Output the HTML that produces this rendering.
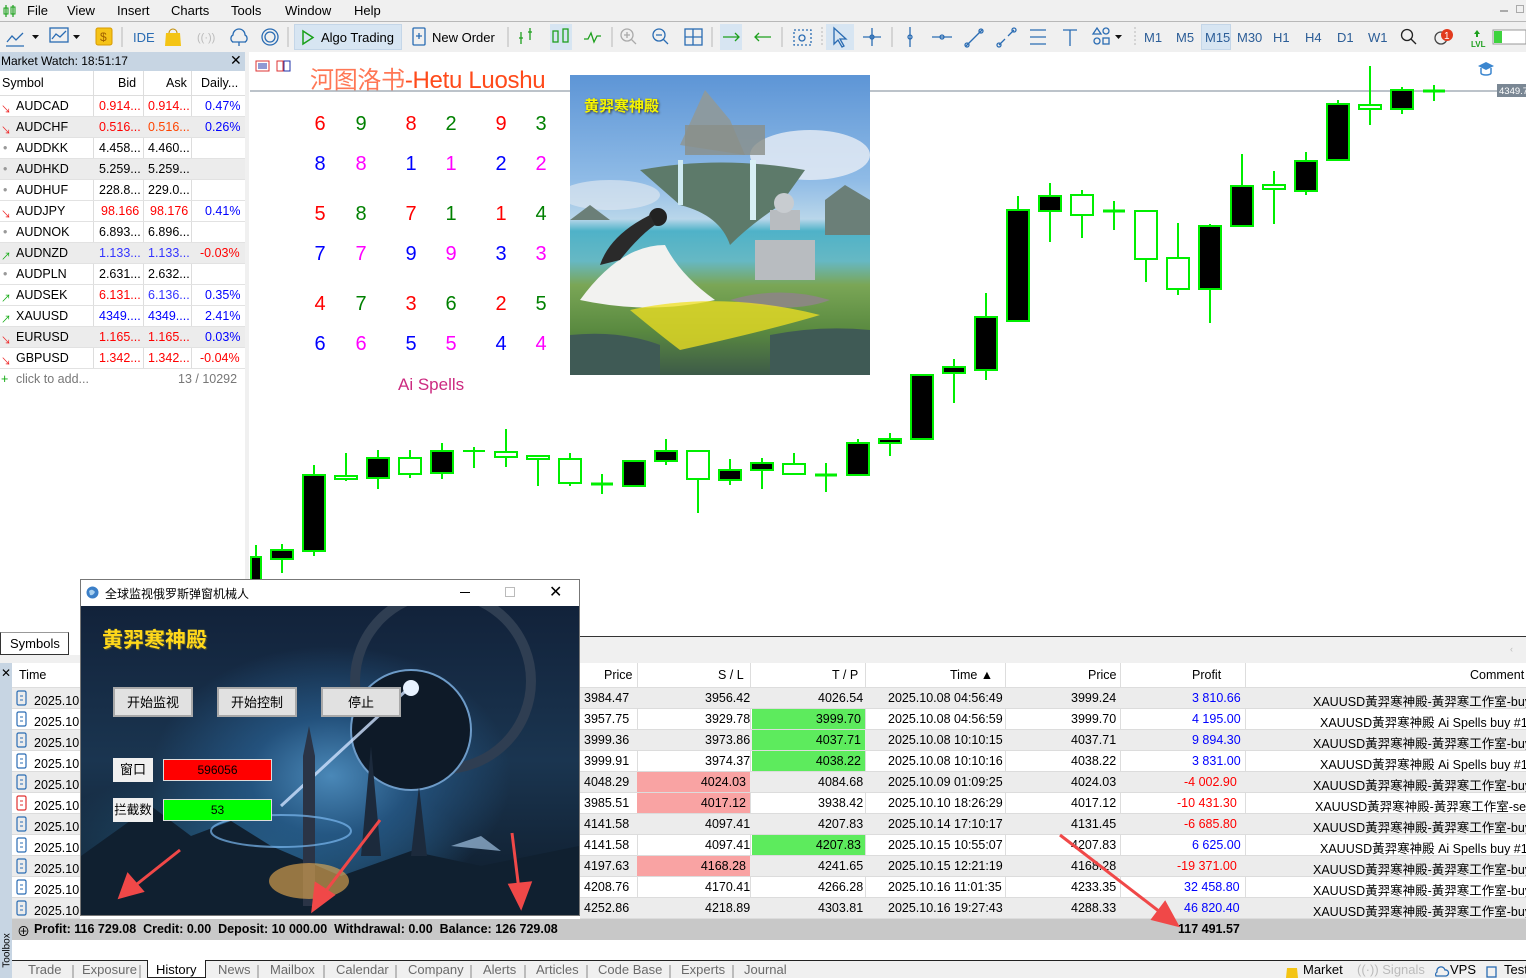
<!DOCTYPE html>
<html><head><meta charset="utf-8">
<style>
*{margin:0;padding:0;box-sizing:border-box}
body{width:1526px;height:978px;overflow:hidden;background:#fff;font-family:"Liberation Sans","Noto Sans CJK SC",sans-serif;font-size:13px;color:#000;position:relative}
.a{position:absolute;white-space:nowrap}
.menu span{position:absolute;top:3px;font-size:13px}
.tf{position:absolute;top:30px;font-size:13px;color:#2b5d97}
.mw{position:absolute;left:0;width:245px;height:21px;font-size:12.5px;border-bottom:1px solid #e2e2e2}
.mw span{position:absolute;top:3px;white-space:nowrap}
.mw .ar{font-size:10px;top:5px}
.tr{position:absolute;left:580px;width:946px;height:21px;font-size:12.5px;border-bottom:1px solid #dcdcdc;overflow:hidden}
.tr span{position:absolute;top:3px;text-align:right;white-space:nowrap}
.lt{position:absolute;left:12px;width:68px;height:21px;font-size:12.5px;border-bottom:1px solid #dcdcdc}
.num{position:absolute;font-size:20px;font-family:"Liberation Sans",sans-serif;width:20px;text-align:center}
.tab{position:absolute;top:962px;font-size:13px;color:#6a6a6a;white-space:nowrap}
.btn{position:absolute;background:#e1e1e1;border:2px solid #a9a9a9;font-size:13px;text-align:center;line-height:27px}
</style></head><body>

<div class="a" style="left:0;top:0;width:1526px;height:22px;background:#f0f0f0"></div>
<svg class="a" style="left:3px;top:4px" width="14" height="14"><path d="M3 1v12M10 1v12" stroke="#1aa01a" stroke-width="1.2"/><rect x="1" y="4" width="4" height="6" fill="none" stroke="#1aa01a"/><rect x="8" y="3" width="4" height="7" fill="none" stroke="#1aa01a"/></svg>
<div class="menu"><span style="left:27px">File</span><span style="left:67px">View</span><span style="left:117px">Insert</span><span style="left:171px">Charts</span><span style="left:231px">Tools</span><span style="left:285px">Window</span><span style="left:354px">Help</span></div>
<div class="a" style="left:1500px;top:10px;width:8px;height:2px;background:#aaa"></div>
<div class="a" style="left:1516px;top:5px;width:8px;height:8px;border:1px solid #aaa"></div>

<div class="a" style="left:0;top:21px;width:1526px;height:31px;background:#f0f0f0;border-top:1px solid #b8b8b8"></div>
<div class="a" style="left:294px;top:24px;width:108px;height:26px;background:#d7e5f2;border:1px solid #c4d6e8"></div>
<div class="a" style="left:550px;top:24px;width:22px;height:26px;background:#d7e5f2"></div>
<div class="a" style="left:720px;top:24px;width:22px;height:26px;background:#d7e5f2"></div>
<div class="a" style="left:826px;top:24px;width:28px;height:26px;background:#d7e5f2"></div>
<div class="a" style="left:1201px;top:24px;width:30px;height:26px;background:#d7e5f2;border:1px solid #c4d6e8"></div>
<svg class="a" style="left:0;top:22px" width="1526" height="30">
 <g fill="none" stroke="#2a6cb3" stroke-width="1.3">
  <path d="M7 20l5-6 4 4 7-7M6 24h18"/>
  <rect x="50" y="6" width="18" height="14"/><path d="M52 17l4-5 4 3 6-6"/>
  <path d="M232 20h14M239 20v4M233 13a6 6 0 0 1 12 0a4 4 0 0 1 0 7h-12a4 4 0 0 1 0-7z"/>
  <circle cx="270" cy="15" r="8"/><circle cx="270" cy="15" r="5"/>
  <rect x="413" y="6" width="12" height="17" rx="1"/><path d="M416 14h6M419 11v6"/>
  <path d="M521 10v12M519 16h4M530 6v12M528 10h4" stroke="#1ea01e"/>
  <rect x="553" y="9" width="5" height="11" stroke="#1ea01e"/><rect x="563" y="7" width="5" height="13" stroke="#1ea01e"/>
  <path d="M584 17l4 0 3-6 3 9 3-6 4 0" stroke="#1ea01e"/>
  <circle cx="627" cy="13" r="6" stroke="#aaa"/><path d="M631 17l5 5M624 13h6M627 10v6" stroke="#aaa"/>
  <circle cx="659" cy="13" r="6"/><path d="M663 17l5 5M656 13h6"/>
  <rect x="685" y="7" width="17" height="16"/><path d="M693 7v16M685 15h17"/>
  <path d="M723 15h16M735 11l4 4-4 4" stroke="#1ea01e"/>
  <path d="M755 15h16M759 11l-4 4 4 4" stroke="#1ea01e"/>
  <rect x="794" y="8" width="17" height="15" stroke-dasharray="2 2"/><circle cx="802" cy="16" r="3"/>
  <path d="M834 6l0 16 4-4 4 7 2-1-4-7 6 0z"/>
  <path d="M872 6v18M863 15h18"/><circle cx="872" cy="15" r="2"/>
  <path d="M910 5v20"/><circle cx="910" cy="15" r="2"/>
  <path d="M932 15h20"/><circle cx="942" cy="15" r="2"/>
  <path d="M966 24l16-16"/><circle cx="967" cy="23" r="2"/><circle cx="981" cy="9" r="2"/>
  <path d="M999 23l6-6M1008 14l6-6"/><circle cx="999" cy="23" r="2"/><circle cx="1014" cy="8" r="2"/>
  <path d="M1030 8h16M1030 15h16M1030 22h16"/>
  <path d="M1063 8h14M1070 8v16"/>
  <path d="M1093 12l4-6 4 6z"/><circle cx="1106" cy="9" r="3"/><circle cx="1097" cy="19" r="3"/><rect x="1103" y="16" width="6" height="6"/>
  <circle cx="1407" cy="13" r="5.5" stroke="#222"/><path d="M1411 17l5 5" stroke="#222"/>
  <circle cx="1441" cy="16" r="6" stroke="#444"/>
 </g>
 <path d="M32 13h7l-3.5 4z M73 13h7l-3.5 4z M1115 13h7l-3.5 4z" fill="#111"/>
 <rect x="96" y="6" width="16" height="17" rx="2" fill="#f5c318" stroke="#d79a00"/><text x="100" y="19" font-size="12" fill="#a06000">$</text>
 <path d="M166 11h14l1 13h-16z" fill="#f4c414"/><path d="M169 11a4 4 0 0 1 8 0" fill="none" stroke="#c08a00"/>
 <text x="197" y="19" font-size="11" fill="#bbb">((·))</text>
 <path d="M303 9v13l10-6.5z" fill="none" stroke="#19a019" stroke-width="1.5"/>
 <path d="M122 5v20M288 5v20M508 5v20M612 5v20M712 5v20M782 5v20M892 5v20" stroke="#b8b8b8"/>
 <path d="M822 5v20M1135 5v20" stroke="#b8b8b8" stroke-dasharray="2 2"/>
 <circle cx="1447" cy="13" r="6" fill="#e23a1e"/><text x="1444" y="17" font-size="10" fill="#fff">1</text>
 <text x="1471" y="25" font-size="8" fill="#1ea01e" font-weight="bold">LVL</text><path d="M1477 8l-3 4h2v3h2v-3h2z" fill="#1ea01e"/>
 <rect x="1493" y="8" width="33" height="14" fill="#fff" stroke="#999"/><rect x="1494" y="9" width="8" height="12" fill="#3ed33e"/>
</svg>
<div class="a" style="left:133px;top:30px;color:#2a6cb3">IDE</div>
<div class="a" style="left:321px;top:30px">Algo Trading</div>
<div class="a" style="left:432px;top:30px">New Order</div>
<div class="tf" style="left:1144px">M1</div><div class="tf" style="left:1176px">M5</div><div class="tf" style="left:1205px">M15</div><div class="tf" style="left:1237px">M30</div><div class="tf" style="left:1273px">H1</div><div class="tf" style="left:1305px">H4</div><div class="tf" style="left:1337px">D1</div><div class="tf" style="left:1368px">W1</div>

<div class="a" style="left:0;top:52px;width:245px;height:580px;background:#fff"></div>
<div class="a" style="left:245px;top:52px;width:4px;height:585px;background:#f0f0f0"></div>
<div class="a" style="left:0;top:52px;width:245px;height:19px;background:#c7d5e3;font-size:12px;padding:2px 0 0 1px">Market Watch: 18:51:17<span style="position:absolute;left:230px;top:0;font-size:14px">✕</span></div>
<div class="a" style="left:0;top:71px;width:245px;height:25px;border-bottom:1px solid #ddd;font-size:12.5px">
 <span class="a" style="left:2px;top:5px">Symbol</span><span class="a" style="left:118px;top:5px">Bid</span><span class="a" style="left:166px;top:5px">Ask</span><span class="a" style="left:201px;top:5px">Daily...</span></div>
<div class="a" style="left:93px;top:71px;width:1px;height:298px;background:#ddd"></div>
<div class="a" style="left:143px;top:71px;width:1px;height:298px;background:#ddd"></div>
<div class="a" style="left:191px;top:71px;width:1px;height:298px;background:#ddd"></div>

<div class="mw" style="top:96px"><span class="ar" style="left:1px;color:#e22">↘</span><span style="left:16px">AUDCAD</span><span style="left:99px;color:#f00">0.914...</span><span style="left:148px;color:#f00">0.914...</span><span style="left:205px;color:#00f">0.47%</span></div>
<div class="mw" style="top:117px;background:#ececec"><span class="ar" style="left:1px;color:#e22">↘</span><span style="left:16px">AUDCHF</span><span style="left:99px;color:#f00">0.516...</span><span style="left:148px;color:#f40">0.516...</span><span style="left:205px;color:#00f">0.26%</span></div>
<div class="mw" style="top:138px"><span style="left:3px;color:#999">•</span><span style="left:16px">AUDDKK</span><span style="left:99px">4.458...</span><span style="left:148px">4.460...</span></div>
<div class="mw" style="top:159px;background:#ececec"><span style="left:3px;color:#999">•</span><span style="left:16px">AUDHKD</span><span style="left:99px">5.259...</span><span style="left:148px">5.259...</span></div>
<div class="mw" style="top:180px"><span style="left:3px;color:#999">•</span><span style="left:16px">AUDHUF</span><span style="left:99px">228.8...</span><span style="left:148px">229.0...</span></div>
<div class="mw" style="top:201px"><span class="ar" style="left:1px;color:#e22">↘</span><span style="left:16px">AUDJPY</span><span style="left:101px;color:#f00">98.166</span><span style="left:150px;color:#f00">98.176</span><span style="left:205px;color:#00f">0.41%</span></div>
<div class="mw" style="top:222px"><span style="left:3px;color:#999">•</span><span style="left:16px">AUDNOK</span><span style="left:99px">6.893...</span><span style="left:148px">6.896...</span></div>
<div class="mw" style="top:243px;background:#ececec"><span class="ar" style="left:1px;color:#1a1">↗</span><span style="left:16px">AUDNZD</span><span style="left:99px;color:#33f">1.133...</span><span style="left:148px;color:#33f">1.133...</span><span style="left:200px;color:#f00">-0.03%</span></div>
<div class="mw" style="top:264px"><span style="left:3px;color:#999">•</span><span style="left:16px">AUDPLN</span><span style="left:99px">2.631...</span><span style="left:148px">2.632...</span></div>
<div class="mw" style="top:285px"><span class="ar" style="left:1px;color:#1a1">↗</span><span style="left:16px">AUDSEK</span><span style="left:99px;color:#f00">6.131...</span><span style="left:148px;color:#33f">6.136...</span><span style="left:205px;color:#00f">0.35%</span></div>
<div class="mw" style="top:306px"><span class="ar" style="left:1px;color:#1a1">↗</span><span style="left:16px">XAUUSD</span><span style="left:99px;color:#00f">4349....</span><span style="left:148px;color:#00f">4349....</span><span style="left:205px;color:#00f">2.41%</span></div>
<div class="mw" style="top:327px;background:#ececec"><span class="ar" style="left:1px;color:#e22">↘</span><span style="left:16px">EURUSD</span><span style="left:99px;color:#f00">1.165...</span><span style="left:148px;color:#f00">1.165...</span><span style="left:205px;color:#00f">0.03%</span></div>
<div class="mw" style="top:348px"><span class="ar" style="left:1px;color:#e22">↘</span><span style="left:16px">GBPUSD</span><span style="left:99px;color:#f00">1.342...</span><span style="left:148px;color:#f00">1.342...</span><span style="left:200px;color:#f00">-0.04%</span></div>
<div class="mw" style="top:369px;border:none;color:#777"><span style="left:1px;color:#1a1">+</span><span style="left:16px">click to add...</span><span style="left:178px">13 / 10292</span></div>

<svg class="a" style="left:0;top:0" width="1526" height="640">
 <line x1="250" y1="91" x2="1497" y2="91" stroke="#7a8794" stroke-width="1"/>
 <rect x="1497" y="84" width="29" height="13" fill="#7a8794"/>
 <text x="1499" y="94" font-size="9.5" fill="#fff">4349.7</text>
 <g stroke="#00ee00" stroke-width="2">
  <line x1="256" y1="545" x2="256" y2="600"/><rect x="251" y="557" width="10" height="40" fill="#000"/>
  <line x1="282" y1="544" x2="282" y2="573"/><rect x="271" y="550" width="22" height="9" fill="#000"/>
  <line x1="314" y1="465" x2="314" y2="556"/><rect x="303" y="475" width="22" height="76" fill="#000"/>
  <line x1="346" y1="453" x2="346" y2="481"/><rect x="335" y="476" width="22" height="3" fill="#fff"/>
  <line x1="378" y1="450" x2="378" y2="489"/><rect x="367" y="458" width="22" height="20" fill="#000"/>
  <line x1="410" y1="450" x2="410" y2="478"/><rect x="399" y="458" width="22" height="16" fill="#fff"/>
  <line x1="442" y1="443" x2="442" y2="479"/><rect x="431" y="451" width="22" height="22" fill="#000"/>
  <line x1="474" y1="447" x2="474" y2="468"/><line x1="463" y1="451" x2="485" y2="451"/>
  <line x1="506" y1="429" x2="506" y2="467"/><rect x="495" y="452" width="22" height="5" fill="#fff"/>
  <line x1="538" y1="455" x2="538" y2="486"/><rect x="527" y="456" width="22" height="3" fill="#fff"/>
  <line x1="570" y1="453" x2="570" y2="486"/><rect x="559" y="459" width="22" height="24" fill="#fff"/>
  <line x1="602" y1="474" x2="602" y2="494"/><line x1="591" y1="484" x2="613" y2="484" stroke-width="3"/>
  <line x1="634" y1="460" x2="634" y2="486"/><rect x="623" y="461" width="22" height="25" fill="#000"/>
  <line x1="666" y1="439" x2="666" y2="465"/><rect x="655" y="451" width="22" height="10" fill="#000"/>
  <line x1="698" y1="451" x2="698" y2="513"/><rect x="687" y="451" width="22" height="28" fill="#fff"/>
  <line x1="730" y1="459" x2="730" y2="485"/><rect x="719" y="470" width="22" height="10" fill="#000"/>
  <line x1="762" y1="458" x2="762" y2="489"/><rect x="751" y="463" width="22" height="7" fill="#000"/>
  <line x1="794" y1="453" x2="794" y2="475"/><rect x="783" y="464" width="22" height="10" fill="#fff"/>
  <line x1="826" y1="463" x2="826" y2="492"/><line x1="815" y1="475" x2="837" y2="475" stroke-width="3"/>
  <line x1="858" y1="439" x2="858" y2="475"/><rect x="847" y="443" width="22" height="32" fill="#000"/>
  <line x1="890" y1="433" x2="890" y2="456"/><rect x="879" y="439" width="22" height="4" fill="#000"/>
  <line x1="922" y1="374" x2="922" y2="440"/><rect x="911" y="375" width="22" height="64" fill="#000"/>
  <line x1="954" y1="359" x2="954" y2="403"/><rect x="943" y="367" width="22" height="6" fill="#000"/>
  <line x1="986" y1="293" x2="986" y2="380"/><rect x="975" y="317" width="22" height="53" fill="#000"/>
  <line x1="1018" y1="196" x2="1018" y2="322"/><rect x="1007" y="210" width="22" height="111" fill="#000"/>
  <line x1="1050" y1="183" x2="1050" y2="242"/><rect x="1039" y="196" width="22" height="15" fill="#000"/>
  <line x1="1082" y1="190" x2="1082" y2="238"/><rect x="1071" y="195" width="22" height="20" fill="#fff"/>
  <line x1="1114" y1="201" x2="1114" y2="230"/><line x1="1103" y1="211" x2="1125" y2="211" stroke-width="3"/>
  <line x1="1146" y1="211" x2="1146" y2="282"/><rect x="1135" y="211" width="22" height="48" fill="#fff"/>
  <line x1="1178" y1="223" x2="1178" y2="295"/><rect x="1167" y="258" width="22" height="31" fill="#fff"/>
  <line x1="1210" y1="224" x2="1210" y2="323"/><rect x="1199" y="226" width="22" height="63" fill="#000"/>
  <line x1="1242" y1="154" x2="1242" y2="226"/><rect x="1231" y="186" width="22" height="40" fill="#000"/>
  <line x1="1274" y1="171" x2="1274" y2="224"/><rect x="1263" y="185" width="22" height="4" fill="#fff"/>
  <line x1="1306" y1="152" x2="1306" y2="195"/><rect x="1295" y="161" width="22" height="30" fill="#000"/>
  <line x1="1338" y1="100" x2="1338" y2="160"/><rect x="1327" y="104" width="22" height="56" fill="#000"/>
  <line x1="1370" y1="66" x2="1370" y2="125"/><rect x="1359" y="105" width="22" height="4" fill="#fff"/>
  <line x1="1402" y1="87" x2="1402" y2="114"/><rect x="1391" y="90" width="22" height="19" fill="#000"/>
  <line x1="1434" y1="85" x2="1434" y2="101"/><line x1="1423" y1="91" x2="1445" y2="91" stroke-width="3"/>
 </g>
 <path d="M1478 66l8-4 8 4-8 4z" fill="#3b86cf"/><path d="M1481 68v5a5 2 0 0 0 10 0v-5" fill="none" stroke="#3b86cf" stroke-width="1.5"/>
 <rect x="256" y="61" width="13" height="10" fill="none" stroke="#d33" stroke-width="1"/><path d="M258 64h9M258 66h9M258 68h9" stroke="#23a" stroke-width="1"/>
 <rect x="277" y="61" width="6" height="10" fill="none" stroke="#d33"/><rect x="284" y="61" width="6" height="10" fill="none" stroke="#23a"/>
</svg>

<div class="a" style="left:310px;top:60px;font-size:24px;color:#ff4a1a;letter-spacing:-0.3px"><span style="color:#ff7755">河图洛书</span>-Hetu Luoshu</div>
<div class="num" style="left:310px;top:113px;color:#f00">6</div><div class="num" style="left:351px;top:113px;color:#008000">9</div><div class="num" style="left:401px;top:113px;color:#f00">8</div><div class="num" style="left:441px;top:113px;color:#008000">2</div><div class="num" style="left:491px;top:113px;color:#f00">9</div><div class="num" style="left:531px;top:113px;color:#008000">3</div>
<div class="num" style="left:310px;top:153px;color:#00f">8</div><div class="num" style="left:351px;top:153px;color:#f0f">8</div><div class="num" style="left:401px;top:153px;color:#00f">1</div><div class="num" style="left:441px;top:153px;color:#f0f">1</div><div class="num" style="left:491px;top:153px;color:#00f">2</div><div class="num" style="left:531px;top:153px;color:#f0f">2</div>
<div class="num" style="left:310px;top:203px;color:#f00">5</div><div class="num" style="left:351px;top:203px;color:#008000">8</div><div class="num" style="left:401px;top:203px;color:#f00">7</div><div class="num" style="left:441px;top:203px;color:#008000">1</div><div class="num" style="left:491px;top:203px;color:#f00">1</div><div class="num" style="left:531px;top:203px;color:#008000">4</div>
<div class="num" style="left:310px;top:243px;color:#00f">7</div><div class="num" style="left:351px;top:243px;color:#f0f">7</div><div class="num" style="left:401px;top:243px;color:#00f">9</div><div class="num" style="left:441px;top:243px;color:#f0f">9</div><div class="num" style="left:491px;top:243px;color:#00f">3</div><div class="num" style="left:531px;top:243px;color:#f0f">3</div>
<div class="num" style="left:310px;top:293px;color:#f00">4</div><div class="num" style="left:351px;top:293px;color:#008000">7</div><div class="num" style="left:401px;top:293px;color:#f00">3</div><div class="num" style="left:441px;top:293px;color:#008000">6</div><div class="num" style="left:491px;top:293px;color:#f00">2</div><div class="num" style="left:531px;top:293px;color:#008000">5</div>
<div class="num" style="left:310px;top:333px;color:#00f">6</div><div class="num" style="left:351px;top:333px;color:#f0f">6</div><div class="num" style="left:401px;top:333px;color:#00f">5</div><div class="num" style="left:441px;top:333px;color:#f0f">5</div><div class="num" style="left:491px;top:333px;color:#00f">4</div><div class="num" style="left:531px;top:333px;color:#f0f">4</div>
<div class="a" style="left:398px;top:375px;font-size:17px;color:#cc2a80">Ai Spells</div>

<div class="a" style="left:570px;top:75px;width:300px;height:300px;overflow:hidden;background:linear-gradient(#5d95d6 0%,#8fbbe6 35%,#b9d6ea 48%,#4fb2c8 52%,#66b8c4 62%,#7aa656 70%,#5a8a40 85%,#3d5a48 100%)">
 <svg width="300" height="300" style="position:absolute;left:0;top:0">
  <ellipse cx="240" cy="80" rx="60" ry="25" fill="#e8eef5" opacity=".8"/>
  <ellipse cx="40" cy="120" rx="50" ry="15" fill="#dbe6f0" opacity=".7"/>
  <path d="M70 95 Q150 80 235 95 L210 130 Q180 150 160 170 Q150 140 110 130z" fill="#5d7a6a"/>
  <path d="M110 70 L135 15 L160 45 L175 80z" fill="#8c9aa0"/>
  <rect x="115" y="50" width="80" height="30" fill="#8a8f88" opacity=".8"/>
  <rect x="108" y="85" width="5" height="45" fill="#cfeaf2"/><rect x="180" y="85" width="6" height="60" fill="#d8f0f5"/>
  <path d="M0 145 L20 130 L40 145z M255 125 L275 110 L300 125 L300 160 L255 160z" fill="#6b7f78"/>
  <path d="M10 225 Q50 170 95 170 Q110 200 145 225 Q80 240 10 225z" fill="#f2f2f0"/>
  <circle cx="88" cy="142" r="9" fill="#222"/><path d="M80 140 Q40 160 30 190 L50 185 Q70 160 85 150z" fill="#2a2a2a"/>
  <path d="M200 135 h30 v20 h-30z M185 165 h60 v40 h-60z" fill="#b8bcc0"/><circle cx="214" cy="128" r="10" fill="#c8ccd0"/>
  <path d="M160 225 Q210 210 260 225 Q220 240 160 225z" fill="#8a8880"/>
  <path d="M60 235 Q150 215 250 240 Q200 255 110 275 Q90 260 60 235z" fill="#f0e020" opacity=".75"/>
  <path d="M0 260 Q50 255 90 270 L90 300 L0 300z M200 260 Q250 250 300 255 L300 300 L200 300z" fill="#3f5a55"/>
 </svg>
 <div class="a" style="left:14px;top:20px;font-size:15px;font-weight:bold;color:#f5f500;text-shadow:1px 1px 2px #333">黄羿寒神殿</div>
</div>

<div class="a" style="left:80px;top:579px;width:500px;height:337px;border:1px solid #777;background:#fff"></div>
<svg class="a" style="left:86px;top:586px" width="13" height="13"><circle cx="6.5" cy="6.5" r="6" fill="#3b7fc8"/><path d="M3 5q3-3 6 1q-2 4-5 3z" fill="#a8d0f0"/></svg>
<div class="a" style="left:105px;top:585px;font-size:12px">全球监视俄罗斯弹窗机械人</div>
<div class="a" style="left:460px;top:592px;width:10px;height:1px;background:#000"></div>
<div class="a" style="left:505px;top:587px;width:10px;height:10px;border:1px solid #bbb"></div>
<div class="a" style="left:549px;top:582px;font-size:16px">✕</div>
<div class="a" style="left:81px;top:606px;width:498px;height:309px;overflow:hidden;background:radial-gradient(ellipse 180px 130px at 250px 170px,#4a88b8 0%,rgba(40,95,145,.7) 45%,rgba(0,0,0,0) 100%),radial-gradient(ellipse 220px 90px at 170px 250px,#23587a 0%,rgba(0,0,0,0) 100%),linear-gradient(#12223a,#1a3550 50%,#0e1a28)">
 <svg width="498" height="309" style="position:absolute;left:0;top:0">
  <circle cx="362" cy="75" r="88" fill="none" stroke="#2f3e52" stroke-width="10"/>
  <circle cx="330" cy="124" r="60" fill="#0e1a28" stroke="#6d9bc8" stroke-width="2"/>
  <path d="M330 80 L200 200" stroke="#cfe2ff" stroke-width="3" opacity=".8"/>
  <circle cx="330" cy="82" r="8" fill="#e8f2ff"/>
  <path d="M0 250 L70 200 L110 230 L150 215 L190 240 L260 270 L330 245 L400 260 L498 240 L498 309 L0 309z" fill="#102030"/>
  <path d="M222 150 L228 120 L234 150 L234 300 L222 300z" fill="#2a3446"/>
  <path d="M280 250 L290 140 L300 250z M330 250 L338 180 L346 250z" fill="#1c2a3c"/>
  <ellipse cx="228" cy="275" rx="40" ry="18" fill="#f0b050" opacity=".6"/>
  <ellipse cx="200" cy="225" rx="70" ry="16" fill="none" stroke="#7ab8f0" stroke-width="2" opacity=".7"/>
  <path d="M370 240 L400 230 L420 245z" fill="#a0c0e0" opacity=".7"/>
 </svg>
 <div class="a" style="left:21px;top:18px;font-size:21px;font-weight:bold;color:#ffd81a;text-shadow:1px 1px 1px #553">黄羿寒神殿</div>
 <div class="btn" style="left:32px;top:81px;width:80px;height:30px">开始监视</div>
 <div class="btn" style="left:136px;top:81px;width:80px;height:30px">开始控制</div>
 <div class="btn" style="left:240px;top:81px;width:80px;height:30px">停止</div>
 <div class="a" style="left:32px;top:152px;width:40px;height:24px;background:#f0f0f0;text-align:center;line-height:24px">窗口</div>
 <div class="a" style="left:82px;top:153px;width:109px;height:22px;background:#f00;border:1px solid #ddd;text-align:center;line-height:20px;font-size:12px">596056</div>
 <div class="a" style="left:32px;top:192px;width:40px;height:24px;background:#f0f0f0;text-align:center;line-height:24px;font-size:12.5px">拦截数</div>
 <div class="a" style="left:82px;top:193px;width:109px;height:22px;background:#0f0;border:1px solid #ddd;text-align:center;line-height:20px;font-size:12px">53</div>
</div>

<div class="a" style="left:0;top:632px;width:69px;height:23px;border:1px solid #333;border-top-color:#999;background:#fff;font-size:13px;padding:3px 0 0 9px">Symbols</div>
<div class="a" style="left:0;top:655px;width:80px;height:8px;background:#f0f0f0"></div>
<div class="a" style="left:580px;top:636px;width:946px;height:27px;background:#f0f0f0;border-top:1px solid #333"></div>
<div class="a" style="left:1510px;top:644px;font-size:9px;color:#bbb">‹</div>
<div class="a" style="left:0;top:663px;width:12px;height:315px;background:#c7d5e3"></div>
<div class="a" style="left:1px;top:666px;font-size:12px">✕</div>
<div class="a" style="left:-10px;top:945px;font-size:10px;transform:rotate(-90deg)">Toolbox</div>
<div class="a" style="left:12px;top:663px;width:68px;height:25px;border-bottom:1px solid #ddd;font-size:12.5px;padding:5px 0 0 7px">Time</div>
<div class="a" style="left:580px;top:663px;width:946px;height:25px;border-bottom:1px solid #ddd;font-size:12.5px">
 <span class="a" style="left:24px;top:5px">Price</span><span class="a" style="left:138px;top:5px">S / L</span><span class="a" style="left:252px;top:5px">T / P</span><span class="a" style="left:370px;top:5px">Time &#9650;</span><span class="a" style="left:508px;top:5px">Price</span><span class="a" style="left:612px;top:5px">Profit</span><span class="a" style="left:890px;top:5px">Comment</span></div>

<div class="lt" style="top:688px;background:#ececec"></div><div class="lt" style="top:709px"></div><div class="lt" style="top:730px;background:#ececec"></div><div class="lt" style="top:751px"></div><div class="lt" style="top:772px;background:#ececec"></div><div class="lt" style="top:793px"></div><div class="lt" style="top:814px;background:#ececec"></div><div class="lt" style="top:835px"></div><div class="lt" style="top:856px;background:#ececec"></div><div class="lt" style="top:877px"></div><div class="lt" style="top:898px;background:#ececec"></div>
<svg class="a" style="left:16px;top:688px" width="12" height="231"><g fill="none" stroke="#2a6cb3" stroke-width="1.2"><rect x="1" y="3" width="9" height="14" rx="1.5"/><rect x="1" y="24" width="9" height="14" rx="1.5"/><rect x="1" y="45" width="9" height="14" rx="1.5"/><rect x="1" y="66" width="9" height="14" rx="1.5"/><rect x="1" y="87" width="9" height="14" rx="1.5"/><rect x="1" y="108" width="9" height="14" rx="1.5" stroke="#e03030"/><rect x="1" y="129" width="9" height="14" rx="1.5"/><rect x="1" y="150" width="9" height="14" rx="1.5"/><rect x="1" y="171" width="9" height="14" rx="1.5"/><rect x="1" y="192" width="9" height="14" rx="1.5"/><rect x="1" y="213" width="9" height="14" rx="1.5"/></g><path d="M4 8h3M4 12h3M4 29h3M4 33h3M4 50h3M4 54h3M4 71h3M4 75h3M4 92h3M4 96h3M4 134h3M4 138h3M4 155h3M4 159h3M4 176h3M4 180h3M4 197h3M4 201h3M4 218h3M4 222h3" stroke="#2a6cb3"/><path d="M4 113h3M4 117h3" stroke="#e03030"/></svg>
<div class="a" style="left:34px;top:691px;font-size:12.5px;line-height:21px">2025.10<br>2025.10<br>2025.10<br>2025.10<br>2025.10<br>2025.10<br>2025.10<br>2025.10<br>2025.10<br>2025.10<br>2025.10</div>

<div class="a" style="left:637px;top:663px;width:1px;height:256px;background:#ddd"></div>
<div class="a" style="left:750px;top:663px;width:1px;height:256px;background:#ddd"></div>
<div class="a" style="left:865px;top:663px;width:1px;height:256px;background:#ddd"></div>
<div class="a" style="left:1005px;top:663px;width:1px;height:256px;background:#ddd"></div>
<div class="a" style="left:1120px;top:663px;width:1px;height:256px;background:#ddd"></div>
<div class="a" style="left:1245px;top:663px;width:1px;height:256px;background:#ddd"></div>

<div class="tr" style="top:688px;background:#ececec"><span style="left:4px">3984.47</span><span style="left:125px">3956.42</span><span style="left:238px">4026.54</span><span style="left:308px">2025.10.08 04:56:49</span><span style="left:491px">3999.24</span><span style="left:612px;color:#00f">3 810.66</span><span style="left:733px">XAUUSD黃羿寒神殿-黃羿寒工作室-buy</span></div>
<div class="tr" style="top:709px"><span style="left:4px">3957.75</span><span style="left:125px">3929.78</span><span style="left:172px;width:113px;height:20px;top:0;padding-top:3px;padding-right:4px;background:#5deb5d">3999.70</span><span style="left:308px">2025.10.08 04:56:59</span><span style="left:491px">3999.70</span><span style="left:612px;color:#00f">4 195.00</span><span style="left:740px">XAUUSD黃羿寒神殿 Ai Spells buy #1</span></div>
<div class="tr" style="top:730px;background:#ececec"><span style="left:4px">3999.36</span><span style="left:125px">3973.86</span><span style="left:172px;width:113px;height:20px;top:0;padding-top:3px;padding-right:4px;background:#5deb5d">4037.71</span><span style="left:308px">2025.10.08 10:10:15</span><span style="left:491px">4037.71</span><span style="left:612px;color:#00f">9 894.30</span><span style="left:733px">XAUUSD黃羿寒神殿-黃羿寒工作室-buy</span></div>
<div class="tr" style="top:751px"><span style="left:4px">3999.91</span><span style="left:125px">3974.37</span><span style="left:172px;width:113px;height:20px;top:0;padding-top:3px;padding-right:4px;background:#5deb5d">4038.22</span><span style="left:308px">2025.10.08 10:10:16</span><span style="left:491px">4038.22</span><span style="left:612px;color:#00f">3 831.00</span><span style="left:740px">XAUUSD黃羿寒神殿 Ai Spells buy #1</span></div>
<div class="tr" style="top:772px;background:#ececec"><span style="left:4px">4048.29</span><span style="left:57px;width:113px;height:20px;top:0;padding-top:3px;padding-right:4px;background:#f9a3a3">4024.03</span><span style="left:238px">4084.68</span><span style="left:308px">2025.10.09 01:09:25</span><span style="left:491px">4024.03</span><span style="left:604px;color:#f00">-4 002.90</span><span style="left:733px">XAUUSD黃羿寒神殿-黃羿寒工作室-buy</span></div>
<div class="tr" style="top:793px"><span style="left:4px">3985.51</span><span style="left:57px;width:113px;height:20px;top:0;padding-top:3px;padding-right:4px;background:#f9a3a3">4017.12</span><span style="left:238px">3938.42</span><span style="left:308px">2025.10.10 18:26:29</span><span style="left:491px">4017.12</span><span style="left:597px;color:#f00">-10 431.30</span><span style="left:735px">XAUUSD黃羿寒神殿-黃羿寒工作室-sel</span></div>
<div class="tr" style="top:814px;background:#ececec"><span style="left:4px">4141.58</span><span style="left:125px">4097.41</span><span style="left:238px">4207.83</span><span style="left:308px">2025.10.14 17:10:17</span><span style="left:491px">4131.45</span><span style="left:604px;color:#f00">-6 685.80</span><span style="left:733px">XAUUSD黃羿寒神殿-黃羿寒工作室-buy</span></div>
<div class="tr" style="top:835px"><span style="left:4px">4141.58</span><span style="left:125px">4097.41</span><span style="left:172px;width:113px;height:20px;top:0;padding-top:3px;padding-right:4px;background:#5deb5d">4207.83</span><span style="left:308px">2025.10.15 10:55:07</span><span style="left:491px">4207.83</span><span style="left:612px;color:#00f">6 625.00</span><span style="left:740px">XAUUSD黃羿寒神殿 Ai Spells buy #1</span></div>
<div class="tr" style="top:856px;background:#ececec"><span style="left:4px">4197.63</span><span style="left:57px;width:113px;height:20px;top:0;padding-top:3px;padding-right:4px;background:#f9a3a3">4168.28</span><span style="left:238px">4241.65</span><span style="left:308px">2025.10.15 12:21:19</span><span style="left:491px">4168.28</span><span style="left:597px;color:#f00">-19 371.00</span><span style="left:733px">XAUUSD黃羿寒神殿-黃羿寒工作室-buy</span></div>
<div class="tr" style="top:877px"><span style="left:4px">4208.76</span><span style="left:125px">4170.41</span><span style="left:238px">4266.28</span><span style="left:308px">2025.10.16 11:01:35</span><span style="left:491px">4233.35</span><span style="left:604px;color:#00f">32 458.80</span><span style="left:733px">XAUUSD黃羿寒神殿-黃羿寒工作室-buy</span></div>
<div class="tr" style="top:898px;background:#ececec"><span style="left:4px">4252.86</span><span style="left:125px">4218.89</span><span style="left:238px">4303.81</span><span style="left:308px">2025.10.16 19:27:43</span><span style="left:491px">4288.33</span><span style="left:604px;color:#00f">46 820.40</span><span style="left:733px">XAUUSD黃羿寒神殿-黃羿寒工作室-buy</span></div>

<div class="a" style="left:12px;top:919px;width:1514px;height:21px;background:#c8c8c8;font-size:12.5px;font-weight:bold">
 <span class="a" style="left:5px;top:2px;font-weight:normal;font-size:13px">⊕</span>
 <span class="a" style="left:22px;top:3px">Profit: 116 729.08&nbsp; Credit: 0.00&nbsp; Deposit: 10 000.00&nbsp; Withdrawal: 0.00&nbsp; Balance: 126 729.08</span>
 <span class="a" style="left:1166px;top:3px">117 491.57</span></div>

<div class="a" style="left:12px;top:960px;width:1514px;height:18px;background:#f0f0f0;border-top:1px solid #222"></div>
<div class="a" style="left:147px;top:960px;width:59px;height:18px;background:#fff;border:1px solid #222;border-top:none"></div>
<div class="tab" style="left:28px">Trade</div><div class="tab" style="left:82px">Exposure</div><div class="tab" style="left:156px;color:#000">History</div><div class="tab" style="left:218px">News</div><div class="tab" style="left:270px">Mailbox</div><div class="tab" style="left:336px">Calendar</div><div class="tab" style="left:408px">Company</div><div class="tab" style="left:483px">Alerts</div><div class="tab" style="left:536px">Articles</div><div class="tab" style="left:598px">Code Base</div><div class="tab" style="left:681px">Experts</div><div class="tab" style="left:744px">Journal</div>
<svg class="a" style="left:0;top:962px" width="1526" height="16"><path d="M73 3v13M140 3v13M258 3v13M324 3v13M396 3v13M471 3v13M525 3v13M587 3v13M670 3v13M733 3v13" stroke="#888"/><path d="M1287 6h10l1 10h-12z" fill="#f4c414"/><path d="M1437 10a4 4 0 0 1 8-2a3 3 0 0 1 1 6h-10a3 3 0 0 1 1-4z" fill="none" stroke="#2a6cb3" stroke-width="1.3"/><rect x="1487" y="5" width="9" height="10" fill="none" stroke="#2a6cb3" stroke-width="1.3"/></svg>
<div class="tab" style="left:1303px;color:#000">Market</div><div class="tab" style="left:1357px;color:#bbb">((·)) Signals</div><div class="tab" style="left:1450px;color:#000">VPS</div><div class="tab" style="left:1504px;color:#000">Tester</div>

<svg class="a" style="left:0;top:0" width="1526" height="978">
 <g stroke="#f04848" stroke-width="3" fill="#f04848">
  <line x1="180" y1="850" x2="132" y2="888"/><path d="M120 897l8-22 14 16z"/>
  <line x1="380" y1="820" x2="322" y2="896"/><path d="M313 910l3-26 17 11z"/>
  <line x1="512" y1="833" x2="519" y2="890"/><path d="M521 907l-11-22 20-2z"/>
  <line x1="1060" y1="835" x2="1160" y2="912"/><path d="M1177 925l-24-6 12-16z"/>
 </g>
</svg>
</body></html>
